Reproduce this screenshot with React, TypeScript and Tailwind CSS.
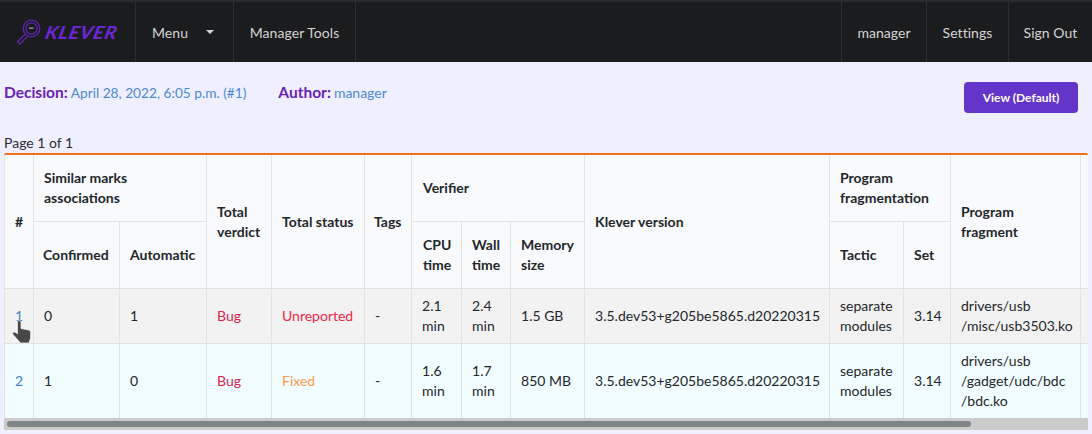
const ROWS = [
  {
    id: 1,
    bg: "bg-[#f2f2f2]",
    confirmed: "0",
    automatic: "1",
    status: "Unreported",
    statusColor: "text-[#f0264a]",
    cpu: ["2.1", "min"],
    wall: ["2.4", "min"],
    memory: "1.5 GB",
    fragment: ["drivers/usb", "/misc/usb3503.ko"],
    height: "h-[55px]",
  },
  {
    id: 2,
    bg: "bg-[#f1fdff]",
    confirmed: "1",
    automatic: "0",
    status: "Fixed",
    statusColor: "text-[#fb9a4e]",
    cpu: ["1.6", "min"],
    wall: ["1.7", "min"],
    memory: "850 MB",
    fragment: ["drivers/usb", "/gadget/udc/bdc", "/bdc.ko"],
    height: "h-[75px]",
  },
];

const COLS = [29, 86, 87, 65, 93, 47, 50, 49, 74, 245, 74, 47, 130, 140];

const TH = "border-l border-[#e3e4e5] pr-[10px] text-left align-middle font-bold text-[14px] leading-[20px]";
const TD = "border-l border-t border-[#dfe2e2] px-[10px] align-middle text-[14px] leading-[20px]";

function NavItem({ children, width }: { children: React.ReactNode; width: string }) {
  return (
    <a className={`flex h-full items-center justify-center border-l border-[#2e2f30] text-[14px] tracking-[0.05px] text-[#d4d4d4] ${width}`}>
      {children}
    </a>
  );
}

function Logo() {
  return (
    <div className="flex h-full w-[135px] items-center pl-[16px]">
      <svg width="25" height="26" viewBox="0 0 25 26" fill="none" stroke="#5f24b0" strokeWidth="1.3">
        <circle cx="15.500" cy="9.500" r="8.300" />
        <circle cx="15.500" cy="9.500" r="5.600" />
        <path d="M13 9.200h4.500" strokeWidth="1.500" stroke="#9a86c4" />
        <path d="M9 15.600 1.500 22.600l2.400 2.400 7.400-7.200" />
      </svg>
      <span className="ml-[5px] inline-block -skew-x-[20deg] font-black text-[18px] leading-none tracking-[0.8px] text-[#6d26d6]">
        KLEVER
      </span>
    </div>
  );
}

function Cursor() {
  return (
    <svg width="20" height="25" viewBox="0 0 20 25" className="pointer-events-none absolute left-[12px] top-[319px]">
      <path
        d="M7 1.500C8.200 1.500 9 2.200 9 3.200V9.500L16.500 11C18 11.300 18.600 12.300 18.600 13.500V19L17 24H8.500L1 15.500C.2 14.500.8 13 2 13 3.200 13 4.500 14 5.500 15V3.200C5.500 2.200 6 1.500 7 1.500Z"
        fill="#484848"
        stroke="#f4f4f4"
        strokeWidth="0.7"
      />
    </svg>
  );
}

export default function App() {
  return (
    <div className="relative h-[434px] w-[1092px] overflow-hidden bg-[#f0efff] text-[14px] text-[#23272b] [font-family:'Lato',sans-serif]">
      <nav className="flex h-[62px] items-stretch border-t-2 border-[#2a2b2c] bg-[#1b1c1d]">
        <Logo />
        <NavItem width="w-[98px] justify-start pl-[16px]">
          <span className="flex items-center">
            Menu
            <span className="ml-[18px] mt-[-1px] h-0 w-0 border-x-[4.500px] border-t-[4.500px] border-x-transparent border-t-[#d4d4d4]" />
          </span>
        </NavItem>
        <NavItem width="w-[123px] border-r">Manager Tools</NavItem>
        <div className="flex-1" />
        <NavItem width="w-[85px]">manager</NavItem>
        <NavItem width="w-[82px]">Settings</NavItem>
        <NavItem width="w-[84px]">Sign Out</NavItem>
      </nav>

      <div className="flex h-[60px] items-start justify-between pl-[4px] pr-[14px] pt-[20px]">
        <div className="flex items-baseline leading-[20px]">
          <span className="text-[15.500px] font-bold text-[#6a22b4]">Decision:</span>
          <span className="ml-[3px] text-[13.700px] text-[#4a8ad0]">April 28, 2022, 6:05 p.m. (#1)</span>
          <span className="ml-[32px] text-[15.500px] font-bold text-[#6a22b4]">Author:</span>
          <span className="ml-[3px] text-[14px] text-[#4a8ad0]">manager</span>
        </div>
        <button className="h-[31px] w-[114px] rounded-[4px] bg-[#6435c9] text-[12px] font-bold text-white">
          View (Default)
        </button>
      </div>

      <div className="h-[31px] pl-[4px] pt-[11px] leading-[20px] text-[#2b2d30]">Page 1 of 1</div>

      <div className="mx-[4px] overflow-hidden rounded-t-[2px] border-t-2 border-[#f2711c]">
        <table className="w-[1216px] table-fixed border-separate border-spacing-0">
          <colgroup>
            {COLS.map((w, i) => (
              <col key={i} style={{ width: w }} />
            ))}
          </colgroup>
          <thead className="bg-[#f9fafb]">
            <tr className="h-[67px]">
              <th rowSpan={2} className={`${TH} pl-[10px] text-center`}>#</th>
              <th colSpan={2} className={`${TH} border-b pl-[10px]`}>Similar marks associations</th>
              <th rowSpan={2} className={`${TH} pl-[10px]`}>Total verdict</th>
              <th rowSpan={2} className={`${TH} pl-[10px]`}>Total status</th>
              <th rowSpan={2} className={`${TH} pl-[9px]`}>Tags</th>
              <th colSpan={3} className={`${TH} border-b pl-[11px]`}>Verifier</th>
              <th rowSpan={2} className={`${TH} pl-[10px]`}>Klever version</th>
              <th colSpan={2} className={`${TH} border-b pl-[10px]`}>Program fragmentation</th>
              <th rowSpan={2} className={`${TH} pl-[10px]`}>Program fragment</th>
              <th rowSpan={2} className={TH} />
            </tr>
            <tr className="h-[66px]">
              <th className={`${TH} whitespace-nowrap pl-[9px]`}>Confirmed</th>
              <th className={`${TH} pl-[10px]`}>Automatic</th>
              <th className={`${TH} pl-[11px]`}>CPU time</th>
              <th className={`${TH} pl-[10px]`}>Wall time</th>
              <th className={`${TH} pl-[10px]`}>Memory size</th>
              <th className={`${TH} pl-[10px]`}>Tactic</th>
              <th className={`${TH} pl-[10px]`}>Set</th>
            </tr>
          </thead>
          <tbody>
            {ROWS.map((row) => (
              <tr key={row.id} className={`${row.bg} ${row.height}`}>
                <td className={`${TD} text-center text-[#4183c4]`}>{row.id}</td>
                <td className={TD}>{row.confirmed}</td>
                <td className={TD}>{row.automatic}</td>
                <td className={`${TD} text-[#db2150]`}>Bug</td>
                <td className={`${TD} ${row.statusColor}`}>{row.status}</td>
                <td className={TD}>-</td>
                <td className={TD}>{row.cpu[0]}<br />{row.cpu[1]}</td>
                <td className={TD}>{row.wall[0]}<br />{row.wall[1]}</td>
                <td className={TD}>{row.memory}</td>
                <td className={`${TD} whitespace-nowrap`}>3.5.dev53+g205be5865.d20220315</td>
                <td className={TD}>separate modules</td>
                <td className={TD}>3.14</td>
                <td className={TD}>
                  {row.fragment.map((line) => (
                    <div key={line} className="whitespace-nowrap">{line}</div>
                  ))}
                </td>
                <td className={TD} />
              </tr>
            ))}
          </tbody>
        </table>
      </div>

      {/* scrollbar */}
      <div className="mx-[4px] h-[12px] bg-[#cbcbcb] px-[3px] pt-[3px]">
        <div className="h-[6px] w-[964px] rounded-[3px] bg-[#7f8484]" />
      </div>
      <Cursor />
    </div>
  );
}
